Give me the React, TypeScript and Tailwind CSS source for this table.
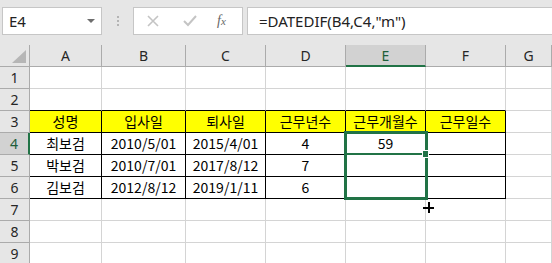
import { Fragment } from 'react';

const uiFont = "font-['Segoe_UI','Noto_Sans','Liberation_Sans',sans-serif]";
const cellFont = "font-['Malgun_Gothic','Noto_Sans_CJK_KR','Noto_Sans',sans-serif]";

const columns = ['A', 'B', 'C', 'D', 'E', 'F', 'G'];
const colWidths = ['w-[72px]', 'w-[84px]', 'w-[80px]', 'w-[80px]', 'w-[80px]', 'w-[80px]', 'flex-1'];

// sheet contents, keyed by row number
const sheet: Record<number, string[]> = {
  3: ['성명', '입사일', '퇴사일', '근무년수', '근무개월수', '근무일수'],
  4: ['최보검', '2010/5/01', '2015/4/01', '4', '59', ''],
  5: ['박보검', '2010/7/01', '2017/8/12', '7', '', ''],
  6: ['김보검', '2012/8/12', '2019/1/11', '6', '', ''],
};

const rows = [1, 2, 3, 4, 5, 6, 7, 8, 9];

const FormulaBar = () => (
  <div className={`flex items-start h-[45px] pt-[7px] bg-[#e6e6e6] ${uiFont}`}>
    <div className='ml-[2px] w-[100px] h-[28px] bg-white border border-[#c6c6c6] flex items-center justify-between pl-[6px] pr-[6px]'>
      <span className='text-[15px] text-[#222] leading-none'>E4</span>
      <span className='w-0 h-0 border-l-[4px] border-r-[4px] border-t-[4px] border-l-transparent border-r-transparent border-t-[#6e6e6e]' />
    </div>
    <div className='w-[31px] h-[28px] flex flex-col items-center justify-center gap-[2px]'>
      <span className='w-[2px] h-[2px] bg-[#b4b4b4]' />
      <span className='w-[2px] h-[2px] bg-[#b4b4b4]' />
      <span className='w-[2px] h-[2px] bg-[#b4b4b4]' />
    </div>
    <div className='w-[110px] h-[28px] bg-white border border-[#c6c6c6] flex items-center'>
      <svg className='ml-[13px]' width='12' height='12' viewBox='0 0 12 12'>
        <path d='M1 1 L11 11 M11 1 L1 11' stroke='#c4c4c4' strokeWidth='1.6' fill='none' />
      </svg>
      <svg className='ml-[24px]' width='14' height='12' viewBox='0 0 14 12'>
        <path d='M1 6 L5 10 L13 1' stroke='#c4c4c4' strokeWidth='2' fill='none' />
      </svg>
      <span className="ml-[20px] text-[14px] italic font-['Liberation_Serif',serif] text-[#666] leading-none">
        f<span className='text-[11px]'>x</span>
      </span>
    </div>
    <div className='ml-[4px] flex-1 h-[28px] bg-white border border-r-0 border-[#c6c6c6] flex items-center pl-[11px]'>
      <span className='text-[15px] text-[#222] leading-none'>=DATEDIF(B4,C4,"m")</span>
    </div>
  </div>
);

const ColumnHeader = () => (
  <div className={`flex h-[22px] bg-[#e6e6e6] ${uiFont}`}>
    <div className='w-[30px] border-r border-b border-[#ababab] flex items-end justify-end pr-[3px] pb-[3px]'>
      <svg width='14' height='13' viewBox='0 0 14 13'>
        <polygon points='14,0 14,13 0,13' fill='#b6b6b6' />
      </svg>
    </div>
    {columns.map((c, i) => {
      const active = c === 'E';
      return (
        <div
          key={c}
          className={`${colWidths[i]} flex items-center justify-center text-[14px] border-r border-[#ababab] ${
            active ? 'bg-[#d2d2d2] border-b-2 border-b-[#217346] text-[#1e5e3a]' : 'border-b text-[#262626]'
          }`}
        >
          {c}
        </div>
      );
    })}
  </div>
);

const cellBorder = (row: number, col: number) => {
  const inTable = row >= 3 && row <= 6 && col < 6;
  const aboveTable = row === 2 && col < 6;
  const leftOfG = row >= 3 && row <= 6 && col === 5;
  const right = inTable || leftOfG ? 'border-r-black' : 'border-r-[#d4d4d4]';
  const bottom = inTable || aboveTable ? 'border-b-black' : 'border-b-[#d4d4d4]';
  return `${right} ${bottom}`;
};

const SheetRow = ({ row }: { row: number }) => {
  const values = sheet[row] ?? [];
  const headerActive = row === 4;
  return (
    <div className='flex h-[22px]'>
      <div
        className={`w-[30px] flex items-center justify-center text-[14px] ${uiFont} border-b border-[#ababab] ${
          headerActive ? 'bg-[#d2d2d2] border-r-2 border-r-[#217346] text-[#1e5e3a]' : 'bg-[#e6e6e6] border-r text-[#262626]'
        }`}
      >
        {row}
      </div>
      {columns.map((c, i) => (
        <div
          key={c}
          className={`${colWidths[i]} border-r border-b ${cellBorder(row, i)} ${
            row === 3 && i < 6 ? 'bg-[#ffff00]' : 'bg-white'
          } flex items-center justify-center text-[14px] text-black ${cellFont}`}
        >
          {values[i] ?? ''}
        </div>
      ))}
    </div>
  );
};

export default function App() {
  return (
    <div className='relative w-[552px] h-[263px] overflow-hidden bg-white'>
      <FormulaBar />
      <ColumnHeader />
      {rows.map((r) => (
        <Fragment key={r}>
          <SheetRow row={r} />
        </Fragment>
      ))}

      {/* selected range E4:E6 */}
      <div className='absolute left-[344px] top-[131px] w-[84px] h-[69px] border-[3px] border-[#217346]' />
      <div className='absolute left-[345px] top-[153px] w-[80px] h-[2px] bg-[#217346]' />
      <div className='absolute left-[423px] top-[151px] w-[5px] h-[6px] bg-[#217346] outline outline-1 outline-white' />

      {/* fill cursor */}
      <div className='absolute left-[423px] top-[207px] w-[11px] h-[2px] bg-black' />
      <div className='absolute left-[428px] top-[202px] w-[2px] h-[11px] bg-black' />
    </div>
  );
}
